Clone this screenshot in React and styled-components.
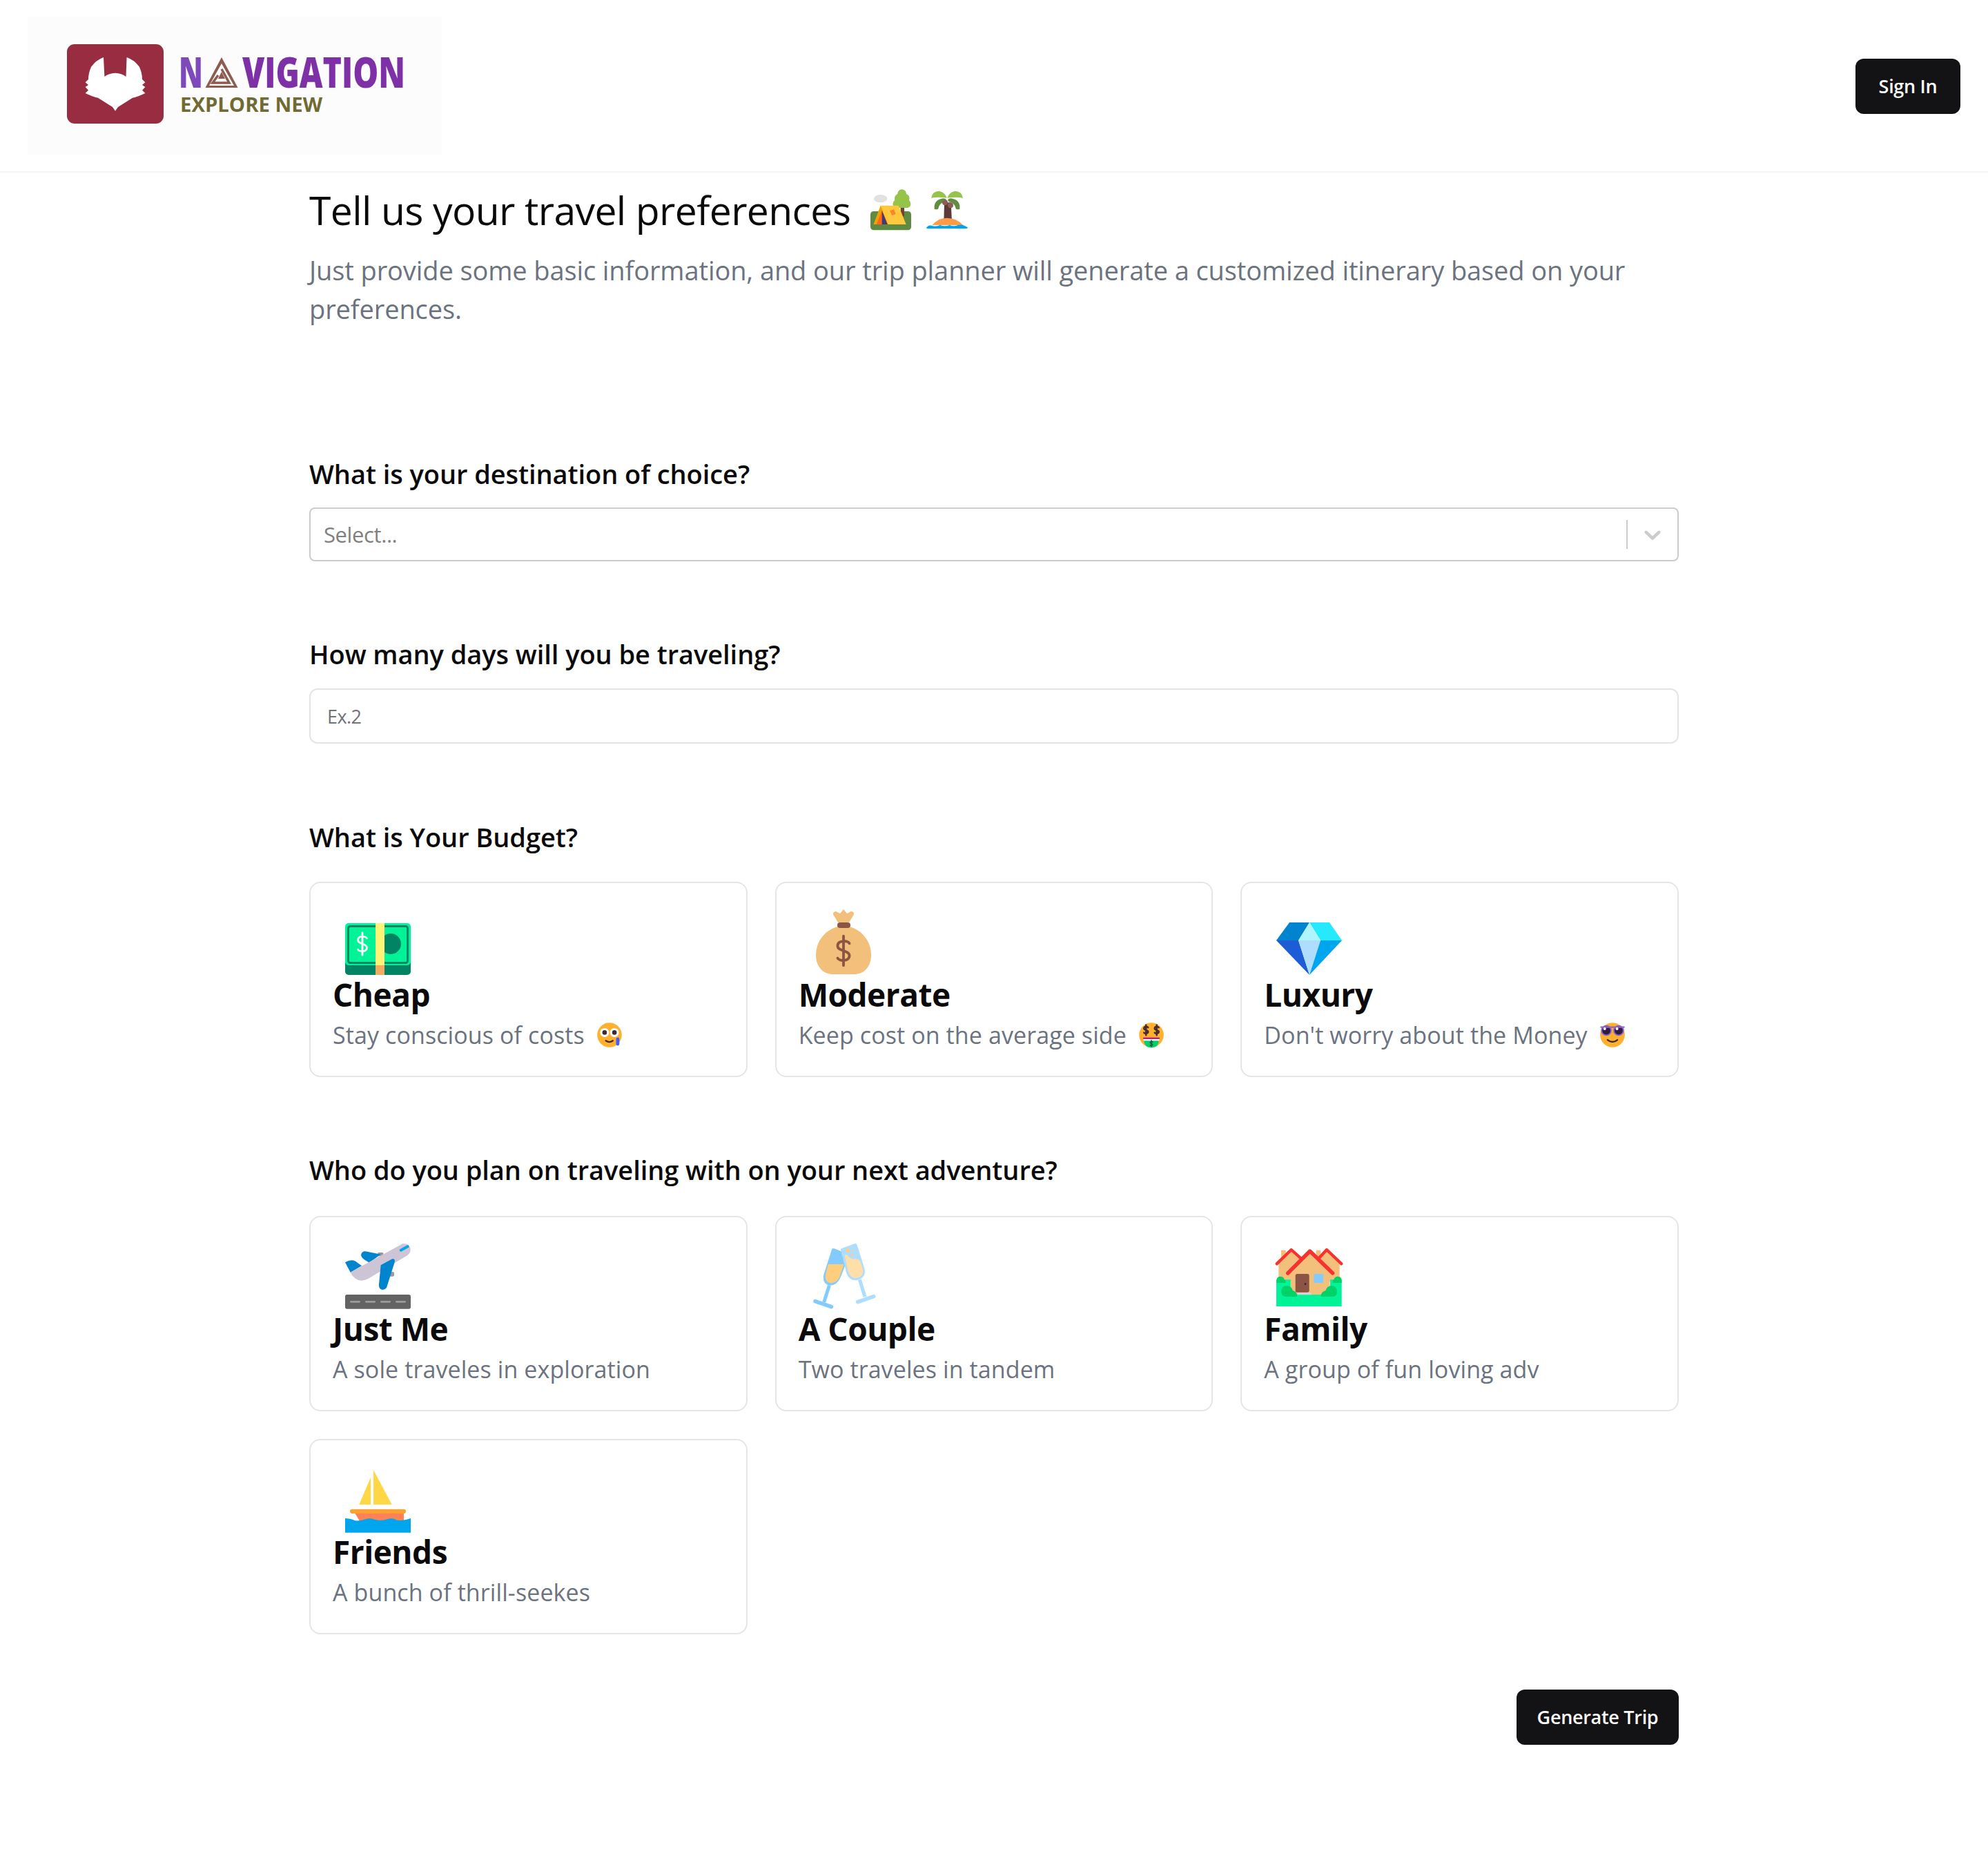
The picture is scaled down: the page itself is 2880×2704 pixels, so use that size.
import React from "react";
import styled, { createGlobalStyle } from "styled-components";

const Global = createGlobalStyle`
  html, body { margin: 0; padding: 0; background: #fff; }
  body { font-family: "Open Sans", "Noto Sans", sans-serif; color: #0a0a0a; }
  * { box-sizing: border-box; }
`;

const Page = styled.div`
  width: 2880px;
  min-height: 2704px;
  background: #fff;
`;
const Header = styled.header`
  height: 250px;
  padding: 24px 40px;
  display: flex;
  align-items: center;
  justify-content: space-between;
  border-bottom: 2px solid #f4f4f5;
  & > button { margin-top: 2px; }
`;
const LogoBox = styled.svg`
  width: 600px;
  height: 200px;
  display: block;
  flex: none;
`;
const DarkButton = styled.button`
  width: ${(p) => p.$width}px;
  height: 80px;
  padding: 0;
  border: 0;
  border-radius: 12px;
  background: #131315;
  color: #fafafa;
  font: 600 27px/40px "Open Sans", sans-serif;
  letter-spacing: -0.3px;
  display: block;
`;
const Main = styled.main`
  padding: 0 448px;
`;
const Title = styled.h1`
  margin: 18px 0 0;
  font-size: 57px;
  line-height: 72px;
  font-weight: 400;
  letter-spacing: -0.6px;
  display: flex;
  align-items: center;
`;
const TitleEmoji = styled.svg`
  width: 60px;
  height: 60px;
  flex: none;
  margin-left: ${(p) => p.$gap}px;
`;
const Subtitle = styled.p`
  margin: 23px 0 0;
  font-size: 38px;
  line-height: 56px;
  color: #6b7280;
  letter-spacing: -0.1px;
`;
const Section = styled.section`
  margin-top: ${(p) => p.$top}px;
`;
const Label = styled.h2`
  margin: 0 0 ${(p) => p.$gap}px;
  font-size: 38px;
  line-height: 54px;
  font-weight: 600;
  letter-spacing: -0.06px;
`;
const SelectBox = styled.div`
  height: 78px;
  border: 2px solid #cccccc;
  border-radius: 8px;
  display: flex;
  align-items: center;
  padding-left: 19px;
`;
const SelectText = styled.span`
  flex: 1;
  font-size: 31px;
  color: #808080;
  letter-spacing: -0.4px;
`;
const SelectSep = styled.span`
  width: 2px;
  height: 42px;
  background: #cccccc;
`;
const SelectChevron = styled.svg`
  width: 40px;
  height: 40px;
  margin: 0 16px;
  fill: #cccccc;
`;
const TextInput = styled.input`
  display: block;
  width: 100%;
  height: 80px;
  border: 2px solid #e4e4e7;
  border-radius: 12px;
  padding: 0 24px;
  font: 400 27px "Open Sans", sans-serif;
  letter-spacing: -0.6px;
  outline: none;
  &::placeholder { color: #71717a; opacity: 1; }
`;
const CardGrid = styled.div`
  display: grid;
  grid-template-columns: repeat(3, 1fr);
  gap: 40px;
`;
const Card = styled.div`
  height: 283px;
  padding: 32px;
  border: 2px solid #e5e5e5;
  border-radius: 16px;
  background: #fff;
`;
const CardIcon = styled.svg`
  display: block;
  width: 130px;
  height: 104px;
`;
const CardTitle = styled.h3`
  margin: 0;
  font-size: 46px;
  line-height: 50px;
  font-weight: 700;
  letter-spacing: -0.5px;
`;
const CardText = styled.p`
  margin: 6px 0 0;
  font-size: 34px;
  line-height: 56px;
  letter-spacing: 0.1px;
  color: #6b7280;
  display: flex;
  align-items: center;
`;
const Face = styled.svg`
  width: 38px;
  height: 38px;
  flex: none;
  margin-left: 17px;
`;
const Actions = styled.div`
  margin-top: 80px;
  display: flex;
  justify-content: flex-end;
`;

const Dollar = ({ x, y, s, color, w = 2.6 }) => (
  <path
    transform={`translate(${x} ${y}) scale(${s})`}
    d="M6 -7.5C5 -10.5 -6 -11.5 -6 -5C-6 1 6 -1 6 5C6 11.5 -5 10.5 -6 7.5M0 -15V15"
    fill="none"
    stroke={color}
    strokeWidth={w}
    strokeLinecap="round"
  />
);

const Money = () => (
  <CardIcon viewBox="0 0 130 104">
    <rect x="18" y="60" width="95" height="41" rx="5" fill="#008463" />
    <rect x="18" y="26" width="95" height="61" rx="5" fill="#00F397" />
    <rect x="22.5" y="30.5" width="86" height="53" rx="3" fill="none" stroke="#008463" strokeWidth="3" />
    <circle cx="84" cy="56" r="15" fill="#008463" />
    <Dollar x={43} y={56} s={1.08} color="#fff" w={2.6} />
    <rect x="62" y="26" width="13" height="61" fill="#FFF478" />
    <rect x="62" y="87" width="13" height="14" fill="#F3AD61" />
  </CardIcon>
);
const Bag = () => (
  <CardIcon viewBox="0 0 130 104">
    <path d="M65 6L70 12L76 9C80 9 81 13 79 15L73 25H57L51 15C49 13 50 9 54 9L60 12Z" fill="#F3C07B" />
    <path d="M65 30C45 30 25 48 25 72C25 90 36 100 50 100H80C94 100 105 90 105 72C105 48 85 30 65 30Z" fill="#F3C07B" />
    <rect x="56" y="25" width="19" height="8" rx="4" fill="#8C5543" />
    <Dollar x={65} y={66} s={1.42} color="#8C5543" w={2.7} />
  </CardIcon>
);
const Diamond = () => (
  <CardIcon viewBox="0 0 130 104">
    <path d="M37 25H66L50 51H18Z" fill="#0084CE" />
    <path d="M66 25H95L113 51H82Z" fill="#26EAFC" />
    <path d="M66 25L82 51H50Z" fill="#AEF5FF" />
    <path d="M18 51H50L66 101Z" fill="#1C5CD7" />
    <path d="M50 51H82L66 101Z" fill="#AEDDFF" />
    <path d="M82 51H113L66 101Z" fill="#00A6ED" />
  </CardIcon>
);
const Plane = () => (
  <CardIcon viewBox="126 135 390 312">
    <rect x="180" y="375" width="285" height="62" rx="8" fill="#636363" />
    {[201, 267, 333, 399].map((x) => (
      <rect key={x} x={x} y="402" width="45" height="8" rx="4" fill="#9B9B9B" />
    ))}
    <rect x="322" y="192" width="24" height="16" rx="4" fill="#9B9B9B" />
    <rect x="368" y="276" width="25" height="20" rx="6" fill="#9B9B9B" />
    <path d="M335 200L268 187Q250 187 249 204Q251 215 262 222L285 236Z" fill="#0084CE" />
    <path d="M430 154Q455 150 463 172Q468 195 445 208L290 300Q250 325 225 305Q210 295 203 278Z" fill="#CDC4D6" />
    <path d="M180 235Q205 220 225 230L252 250L203 278Z" fill="#0084CE" />
    <path d="M335 247L385 220Q398 217 395 235L360 345Q350 358 335 352Q325 345 327 330Z" fill="#0084CE" />
    <path d="M422 182L452 166" stroke="#00A6ED" strokeWidth="12" strokeLinecap="round" />
  </CardIcon>
);
const Glasses = () => (
  <CardIcon viewBox="50 135 390 312">
    <path d="M183 335L160 408" stroke="#83CBFF" strokeWidth="15" />
    <path d="M122 404L192 428" stroke="#83CBFF" strokeWidth="17" strokeLinecap="round" />
    <path d="M315 310L338 385" stroke="#AEDDFF" strokeWidth="15" />
    <path d="M307 407L376 383" stroke="#AEDDFF" strokeWidth="17" strokeLinecap="round" />
    <path d="M195 176Q198 172 205 175L233 186Q238 188 240 195L252 248L232 300Q215 338 182 335Q150 325 160 285Z" fill="#83CBFF" />
    <path d="M178 243H246L228 298Q215 325 190 325Q160 320 168 285Z" fill="#FFCE7C" />
    <path d="M232 176L295 153Q302 152 304 160L336 262Q345 300 305 312Q272 318 258 282Z" fill="#AEDDFF" />
    <path d="M250 205Q256 198 264 206Q275 222 295 220Q315 220 320 235L328 265Q335 295 302 303Q278 306 265 275Z" fill="#FFDEA7" />
    <circle cx="264" cy="183" r="8" fill="#FFCE7C" />
    <circle cx="285" cy="183" r="3.5" fill="#FFCE7C" />
    <circle cx="283" cy="204" r="5.5" fill="#FFCE7C" />
  </CardIcon>
);
const Houses = () => (
  <CardIcon viewBox="94 135 390 312">
    <rect x="169" y="182" width="20" height="40" fill="#F3C07B" />
    <rect x="321" y="182" width="20" height="40" fill="#F3C07B" />
    <path d="M158 240L213 185L268 240V320H158Z" fill="#F3C07B" />
    <path d="M312 240L367 185L423 240V320H312Z" fill="#F3C07B" />
    <path d="M150 241L213 180L262 224M326 224L367 180L431 241" fill="none" stroke="#F8312F" strokeWidth="13" strokeLinecap="round" strokeLinejoin="round" />
    <path d="M210 262L294 192L380 262V380H210Z" fill="#F3C07B" />
    <path d="M198 282L294 186L393 282" fill="none" stroke="#F8312F" strokeWidth="16" strokeLinecap="round" strokeLinejoin="round" />
    <path d="M148 310H210V375H382V310H432V426H148Z" fill="#00F397" />
    <rect x="231" y="285" width="60" height="80" rx="8" fill="#8C5543" />
    <circle cx="274" cy="329" r="4" fill="#321B41" />
    <rect x="311" y="285" width="41" height="39" rx="4" fill="#83CBFF" />
    <rect x="240" y="366" width="60" height="10" fill="#D3D3D3" />
    <path d="M170 360Q172 336 195 336Q215 338 220 358Q240 362 238 384H190Q170 384 170 360Z" fill="#00D26A" />
    <path d="M412 360Q410 336 387 336Q367 338 362 358Q342 362 342 384H392Q412 384 412 360Z" fill="#00D26A" />
    <path d="M149 324V312Q150 296 168 296Q180 298 182 308Q190 312 188 324Z" fill="#00D26A" />
    <path d="M432 324V312Q431 296 413 296Q401 298 399 308Q392 312 393 324Z" fill="#00D26A" />
  </CardIcon>
);
const Boat = () => (
  <CardIcon viewBox="126 111 390 312">
    <path d="M291 176V294H241Z" fill="#FFD643" />
    <path d="M303 144V294H383Z" fill="#FFD643" />
    <path d="M222 330H435V370H245Z" fill="#FF8257" />
    <rect x="201" y="314" width="243" height="19" rx="9.5" fill="#FFA032" />
    <path d="M180 354Q205 354 222 364Q250 366 268 358Q290 350 312 360Q340 366 362 358Q385 350 405 362Q435 366 465 354V416H180Z" fill="#00A6ED" />
  </CardIcon>
);

const FaceBase = ({ children }) => (
  <Face viewBox="0 0 32 32">
    <circle cx="16" cy="16" r="15" fill="#FFB02E" />
    {children}
  </Face>
);
const Pleading = () => (
  <FaceBase>
    <circle cx="10" cy="13" r="5.5" fill="#fff" />
    <circle cx="22" cy="13" r="5.5" fill="#fff" />
    <circle cx="10" cy="13" r="2.8" fill="#402A32" />
    <circle cx="22" cy="13" r="2.8" fill="#402A32" />
    <path d="M11.5 23Q16 26 20 23" fill="none" stroke="#402A32" strokeWidth="2" strokeLinecap="round" />
    <rect x="24" y="19" width="4" height="10" rx="2" fill="#3F5FFF" />
  </FaceBase>
);
const MoneyMouth = () => (
  <FaceBase>
    <Dollar x={9.5} y={10} s={0.42} color="#402A32" w={5} />
    <Dollar x={22.5} y={10} s={0.42} color="#402A32" w={5} />
    <rect x="6" y="19" width="20" height="2" fill="#BB1D80" />
    <path d="M7 21H25V23Q25 31 16 31.5Q7 31 7 23Z" fill="#00D26A" />
    <path d="M6 21H26L25.5 23H6.5Z" fill="#fff" />
    <Dollar x={16} y={26.5} s={0.26} color="#1C5C3C" w={5} />
  </FaceBase>
);
const Cool = () => (
  <FaceBase>
    <path d="M10 22Q16 27 22 22" fill="none" stroke="#402A32" strokeWidth="2" strokeLinecap="round" />
    <circle cx="8.5" cy="10.5" r="5.8" fill="#321B41" stroke="#8D65C5" strokeWidth="1.6" />
    <circle cx="23.5" cy="10.5" r="5.8" fill="#321B41" stroke="#8D65C5" strokeWidth="1.6" />
    <rect x="1" y="5.5" width="30" height="1.8" rx="0.9" fill="#8D65C5" />
    <circle cx="6.5" cy="8.5" r="1.7" fill="#fff" />
    <circle cx="21.5" cy="8.5" r="1.7" fill="#fff" />
  </FaceBase>
);

const Logo = () => (
  <LogoBox viewBox="0 0 600 200">
    <rect width="600" height="200" fill="#fcfcfc" />
    <rect x="57" y="40" width="140" height="115" rx="11" fill="#982D41" />
    <path
      fill="#fff"
      d="M110 59L111.4 87Q118 82 127 81.7Q136 82 142.5 87L143.6 59Q155 63 162 73Q166 82 166 91L170.4 95.3L166 99L170.4 102L166 106.7L170.4 111Q160 116 152 117.7L131 131L127 136.7L123 131L102 117.7Q94 116 83.6 111L88 106.7L83.6 102L88 99L83.6 95.3L88 91Q88 82 92 73Q99 63 110 59Z"
    />
    <g fontFamily="'Open Sans', sans-serif">
      <text x="219" y="103" fontSize="62" fontWeight="800" fill="#7E4ABB" textLength="35" lengthAdjust="spacingAndGlyphs">N</text>
      <text x="311" y="103" fontSize="62" fontWeight="800" fill="#7E30A6" textLength="236" lengthAdjust="spacingAndGlyphs">VIGATION</text>
      <text x="221" y="138" fontSize="29" fontWeight="700" fill="#716A32" textLength="206" lengthAdjust="spacingAndGlyphs">EXPLORE NEW</text>
    </g>
    <path d="M281 59L304.6 103H257.5Z" fill="#8C5C50" />
    <path d="M281 68L299 100H263Z" fill="#fcfcfc" />
    <path d="M281 76L292 96H268L276 85" fill="none" stroke="#8C5C50" strokeWidth="3.5" />
    <path d="M281 80L286 90H276Z" fill="#8C5C50" />
  </LogoBox>
);

const budget = [
  { Icon: Money, title: "Cheap", text: "Stay conscious of costs", Emoji: Pleading },
  { Icon: Bag, title: "Moderate", text: "Keep cost on the average side", Emoji: MoneyMouth },
  { Icon: Diamond, title: "Luxury", text: "Don't worry about the Money", Emoji: Cool },
];
const people = [
  { Icon: Plane, title: "Just Me", text: "A sole traveles in exploration" },
  { Icon: Glasses, title: "A Couple", text: "Two traveles in tandem" },
  { Icon: Houses, title: "Family", text: "A group of fun loving adv" },
  { Icon: Boat, title: "Friends", text: "A bunch of thrill-seekes" },
];

const OptionCard = ({ Icon, title, text, Emoji }) => (
  <Card>
    <Icon />
    <CardTitle>{title}</CardTitle>
    <CardText>
      {text}
      {Emoji && <Emoji />}
    </CardText>
  </Card>
);

export default function App() {
  return (
    <Page>
      <Global />
      <Header>
        <Logo />
        <DarkButton $width={152}>Sign In</DarkButton>
      </Header>
      <Main>
        <Title>
          Tell us your travel preferences
          <TitleEmoji $gap={28} viewBox="121 72 180 180">
            <ellipse cx="168" cy="113" rx="29" ry="17" fill="#E1E1E1" />
            <rect x="124" y="168" width="177" height="82" rx="14" fill="#5F8A42" />
            <rect x="255" y="140" width="16" height="50" fill="#6D4534" />
            <path d="M260 73c14 0 20 12 20 20c12 4 16 16 12 26c12 14 8 34-10 34h-44c-18 0-22-22-8-34c-4-10 2-22 12-26c0-8 6-20 18-20z" fill="#96C34A" />
            <path d="M170 143H246L279 225H138Z" fill="#FFC83D" />
            <path d="M168 143L138 225H200Z" fill="#F59F00" />
            <path d="M174 165L150 225H200Z" fill="#FF6723" />
            <path d="M174 165V225H198Z" fill="#433B6B" />
            <path d="M208 166L226 160L234 180L218 186Z" fill="#FF822D" />
          </TitleEmoji>
          <TitleEmoji $gap={22} viewBox="369 72 180 180">
            <path d="M447 130L476 130L480 215H445Z" fill="#5D3A36" />
            <path d="M395 228Q420 197 458 197Q500 197 528 228Z" fill="#FF9A45" />
            <path d="M370 242Q375 226 392 230Q410 236 428 228Q450 236 470 228Q490 236 506 228Q530 222 548 240Z" fill="#00A6ED" />
            <path d="M370 236H548V240Q548 243 544 243H374Q370 243 370 240Z" fill="#00A6ED" />
            <path d="M404 158Q400 118 442 112Q462 114 452 126Q425 130 420 158Q410 162 404 158Z" fill="#5F8F3E" />
            <path d="M514 158Q518 118 476 112Q456 114 466 126Q493 130 498 158Q508 162 514 158Z" fill="#5F8F3E" />
            <path d="M390 110Q395 80 425 80Q450 85 458 110Q420 105 390 110Z" fill="#96C34A" />
            <path d="M528 110Q523 80 493 80Q468 85 460 110Q498 105 528 110Z" fill="#96C34A" />
            <circle cx="450" cy="130" r="12" fill="#8C5F56" />
            <circle cx="474" cy="142" r="12" fill="#8C5F56" />
          </TitleEmoji>
        </Title>
        <Subtitle>
          Just provide some basic information, and our trip planner will generate a customized itinerary based on your preferences.
        </Subtitle>

        <Section $top={184}>
          <Label $gap={22}>What is your destination of choice?</Label>
          <SelectBox>
            <SelectText>Select...</SelectText>
            <SelectSep />
            <SelectChevron viewBox="0 0 20 20">
              <path d="M4.516 7.548c0.436-0.446 1.043-0.481 1.576 0l3.908 3.747 3.908-3.747c0.533-0.481 1.141-0.446 1.574 0 0.436 0.445 0.408 1.197 0 1.615-0.406 0.418-4.695 4.502-4.695 4.502-0.217 0.223-0.502 0.335-0.787 0.335s-0.57-0.112-0.789-0.335c0 0-4.287-4.084-4.695-4.502s-0.436-1.17 0-1.615z" />
            </SelectChevron>
          </SelectBox>
        </Section>

        <Section $top={107}>
          <Label $gap={23}>How many days will you be traveling?</Label>
          <TextInput placeholder="Ex.2" />
        </Section>

        <Section $top={108}>
          <Label $gap={38}>What is Your Budget?</Label>
          <CardGrid>
            {budget.map((b) => (
              <OptionCard key={b.title} {...b} />
            ))}
          </CardGrid>
        </Section>

        <Section $top={107}>
          <Label $gap={40}>Who do you plan on traveling with on your next adventure?</Label>
          <CardGrid>
            {people.map((b) => (
              <OptionCard key={b.title} {...b} />
            ))}
          </CardGrid>
        </Section>

        <Actions>
          <DarkButton $width={235}>Generate Trip</DarkButton>
        </Actions>
      </Main>
    </Page>
  );
}
